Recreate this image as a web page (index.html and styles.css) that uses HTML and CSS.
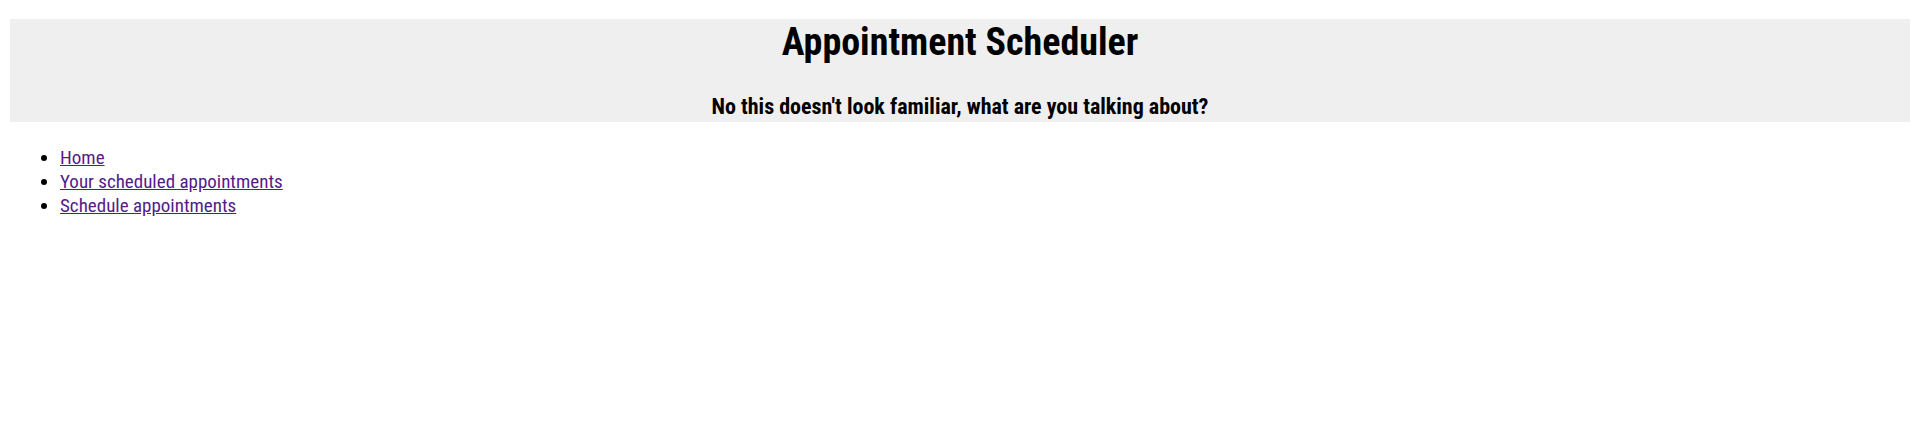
FILE: index.html
```html
<!DOCTYPE html>
<html lang="en">
<head>
<meta charset="utf-8">
<title>Appointment Scheduler</title>
<link rel="stylesheet" href="styles.css">
</head>
<body>
<header class="site-header">
  <h1 class="site-title">Appointment Scheduler</h1>
  <h2 class="site-subtitle">No this doesn't look familiar, what are you talking about?</h2>
</header>
<nav class="site-nav">
  <ul class="nav-list">
    <li><a href="#">Home</a></li>
    <li><a href="#">Your scheduled appointments</a></li>
    <li><a href="#">Schedule appointments</a></li>
  </ul>
</nav>
</body>
</html>
```
FILE: styles.css
```css
html, body {
  margin: 0;
  padding: 0;
  background: #ffffff;
}
body {
  font-family: "Roboto Condensed", Roboto, sans-serif;
  font-stretch: condensed;
  color: #000000;
}
.site-header {
  margin: 19px 1px 0 10px;
  padding: 1px 0 0 0;
  background: #efefef;
  text-align: center;
  height: 103px;
  box-sizing: border-box;
}
.site-title {
  margin: 0;
  font-size: 38px;
  line-height: 44px;
  font-weight: 700;
}
.site-subtitle {
  margin: 29px 0 0 0;
  font-size: 22px;
  line-height: 28px;
  font-weight: 700;
}
.site-nav {
  padding: 0 0 0 20px;
}
.nav-list {
  margin: 24px 0 0 0;
  padding-left: 40px;
  font-size: 19px;
  line-height: 24px;
}
.nav-list a {
  color: #551a8b;
}
```
